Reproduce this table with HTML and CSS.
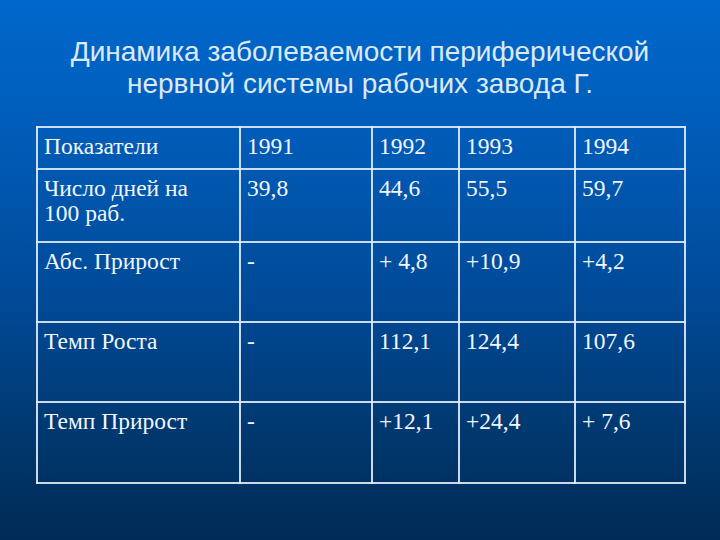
FILE: index.html
```html
<!DOCTYPE html>
<html lang="ru">
<head>
<meta charset="utf-8">
<title>Динамика заболеваемости</title>
<link rel="stylesheet" href="styles.css">
</head>
<body>
<div class="slide">
  <h1 class="title">Динамика заболеваемости периферической<br>нервной системы рабочих завода Г.</h1>
  <table class="data">
    <colgroup>
      <col class="c1"><col class="c2"><col class="c3"><col class="c4"><col class="c5">
    </colgroup>
    <tr class="r1"><td>Показатели</td><td>1991</td><td>1992</td><td>1993</td><td>1994</td></tr>
    <tr class="r2"><td>Число дней на<br>100 раб.</td><td>39,8</td><td>44,6</td><td>55,5</td><td>59,7</td></tr>
    <tr class="r3"><td>Абс. Прирост</td><td>-</td><td>+ 4,8</td><td>+10,9</td><td>+4,2</td></tr>
    <tr class="r4"><td>Темп Роста</td><td>-</td><td>112,1</td><td>124,4</td><td>107,6</td></tr>
    <tr class="r5"><td>Темп Прирост</td><td>-</td><td>+12,1</td><td>+24,4</td><td>+ 7,6</td></tr>
  </table>
</div>
</body>
</html>
```

FILE: styles.css
```css
html, body {
  margin: 0;
  padding: 0;
}
body {
  width: 720px;
  height: 540px;
  overflow: hidden;
  background: linear-gradient(to bottom, #0068cc 0%, #005cb8 25%, #004a98 55%, #00386f 80%, #002b57 100%);
}
.slide {
  padding-top: 36px;
}
.title {
  margin: 0;
  font-family: "Liberation Sans", Arial, sans-serif;
  font-weight: normal;
  font-size: 28px;
  line-height: 32px;
  color: #dbe9f8;
  text-align: center;
}
.data {
  margin: 26px 0 0 36px;
  border-collapse: collapse;
  table-layout: fixed;
  width: 648px;
  font-family: "Liberation Serif", "Times New Roman", serif;
  font-size: 23.5px;
  color: #f2f6ff;
}
.c1 { width: 203px; }
.c2 { width: 132px; }
.c3 { width: 87px; }
.c4 { width: 116px; }
.c5 { width: 110px; }
.data td {
  border: 2px solid rgba(225, 236, 250, 0.9);
  padding: 6px 6px 0 6px;
  vertical-align: top;
  line-height: 25px;
}
.r1 td { height: 42px; box-sizing: border-box; }
.r2 td { height: 73px; box-sizing: border-box; }
.r3 td { height: 80px; box-sizing: border-box; }
.r4 td { height: 80px; box-sizing: border-box; }
.r5 td { height: 81px; box-sizing: border-box; }
```
